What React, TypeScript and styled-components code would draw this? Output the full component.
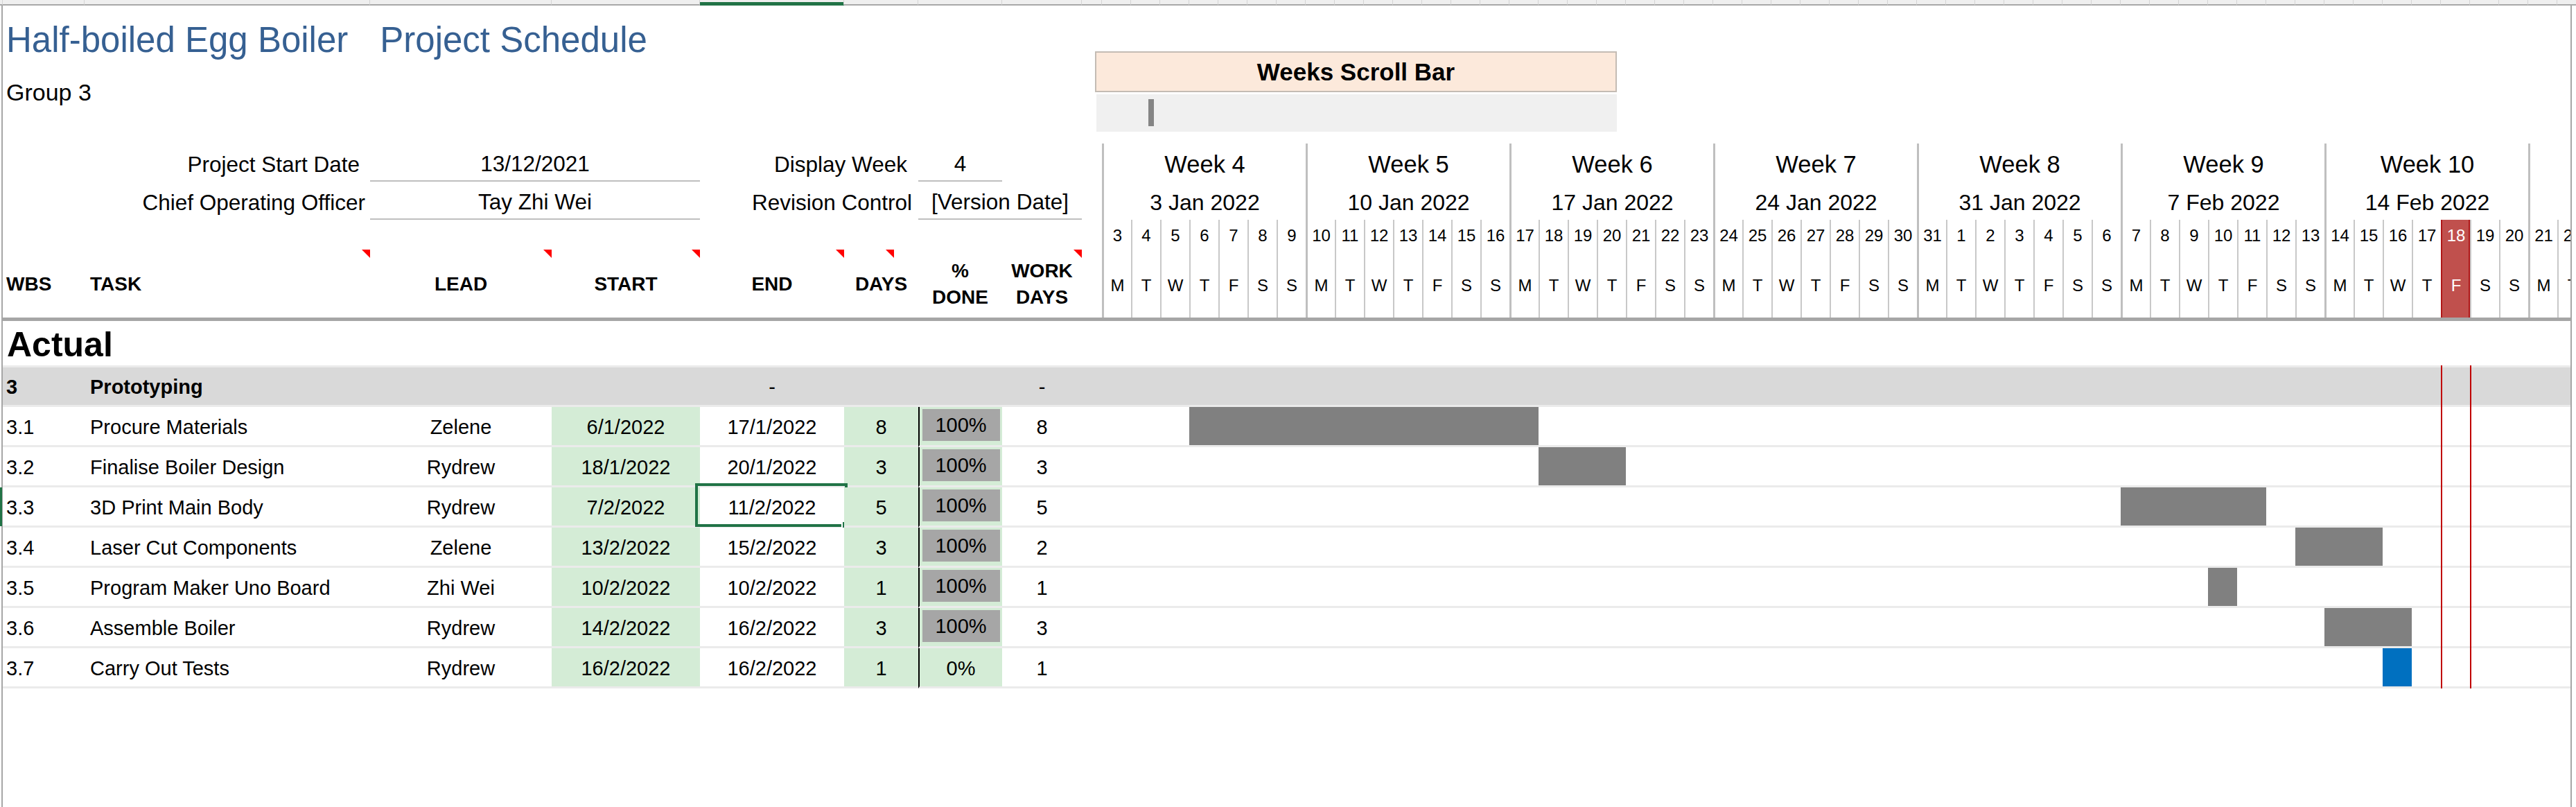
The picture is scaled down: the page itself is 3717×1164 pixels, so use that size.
import React from "react";
import styled, { createGlobalStyle, css } from "styled-components";

const DAY_W = 42;
const LEFT_COLS = [118, 412, 262, 214, 208, 107, 121, 115, 29];
const LEFT_W = 1586;
const GANTT_W = 2119;
const TODAY = 46; // 18 Feb 2022, counted from Mon 3 Jan 2022
const GREEN = "#d4ecd6";
const colTemplate = LEFT_COLS.map((w) => `${w}px`).join(" ");

const GlobalStyle = createGlobalStyle`
  html, body {
    margin: 0;
    padding: 0;
    background: #ffffff;
  }
  body {
    font-family: "Liberation Sans", Arial, sans-serif;
    color: #000000;
  }
`;

const MONTHS = ["Jan", "Feb", "Mar"];
const LETTERS = ["M", "T", "W", "T", "F", "S", "S"];

// week 11 only peeks in at the right edge, its labels sit off screen
const weeks = Array.from({ length: 8 }, (_, w) => {
  const first = new Date(2022, 0, 3 + w * 7);
  return {
    n: w + 4,
    shown: w < 7,
    date: `${first.getDate()} ${MONTHS[first.getMonth()]} ${first.getFullYear()}`,
    days: Array.from({ length: 7 }, (_, d) => ({
      num: new Date(2022, 0, 3 + w * 7 + d).getDate(),
      idx: w * 7 + d,
    })),
  };
});

type Task = {
  wbs: string;
  task: string;
  lead: string;
  start: string;
  end: string;
  days: number;
  done: number;
  work: number;
  from: number;
  span: number;
};

const tasks: Task[] = [
  { wbs: "3.1", task: "Procure Materials", lead: "Zelene", start: "6/1/2022", end: "17/1/2022", days: 8, done: 100, work: 8, from: 3, span: 12 },
  { wbs: "3.2", task: "Finalise Boiler Design", lead: "Rydrew", start: "18/1/2022", end: "20/1/2022", days: 3, done: 100, work: 3, from: 15, span: 3 },
  { wbs: "3.3", task: "3D Print Main Body", lead: "Rydrew", start: "7/2/2022", end: "11/2/2022", days: 5, done: 100, work: 5, from: 35, span: 5 },
  { wbs: "3.4", task: "Laser Cut Components", lead: "Zelene", start: "13/2/2022", end: "15/2/2022", days: 3, done: 100, work: 2, from: 41, span: 3 },
  { wbs: "3.5", task: "Program Maker Uno Board", lead: "Zhi Wei", start: "10/2/2022", end: "10/2/2022", days: 1, done: 100, work: 1, from: 38, span: 1 },
  { wbs: "3.6", task: "Assemble Boiler", lead: "Rydrew", start: "14/2/2022", end: "16/2/2022", days: 3, done: 100, work: 3, from: 42, span: 3 },
  { wbs: "3.7", task: "Carry Out Tests", lead: "Rydrew", start: "16/2/2022", end: "16/2/2022", days: 1, done: 0, work: 1, from: 44, span: 1 },
];

const headers = [
  { label: "WBS", left: true, pad: 5 },
  { label: "TASK", left: true, pad: 8, flag: 0 },
  { label: "LEAD", flag: 0 },
  { label: "START", flag: 0 },
  { label: "END", flag: 0 },
  { label: "DAYS", flag: 35 },
  { label: "%\nDONE" },
  { label: "WORK\nDAYS", flag: 0 },
  { label: "" },
];

export default function App() {
  return (
    <>
      <GlobalStyle />
      <Strip>
        <StripCell />
        {LEFT_COLS.map((_, i) => (
          <StripCell key={i} $active={i === 4} />
        ))}
        {Array.from({ length: 51 }, (_, i) => (
          <StripCell key={`d${i}`} />
        ))}
      </Strip>
      <Sheet>
        <TitleBand>
          <TitleBlock>
            <Title>
              <span>Half-boiled Egg Boiler</span>
              <span>Project Schedule</span>
            </Title>
            <GroupName>Group 3</GroupName>
          </TitleBlock>
          <ScrollBlock>
            <ScrollLabel>Weeks Scroll Bar</ScrollLabel>
            <ScrollTrack>
              <Thumb />
            </ScrollTrack>
          </ScrollBlock>
        </TitleBand>

        <HeadBand>
          <LeftHead>
            <InfoRow>
              <InfoLabel $pad={15}>Project Start Date</InfoLabel>
              <InfoValue>13/12/2021</InfoValue>
              <InfoLabel $pad={16}>Display Week</InfoLabel>
              <InfoValue>4</InfoValue>
            </InfoRow>
            <InfoRow>
              <InfoLabel $pad={7}>Chief Operating Officer</InfoLabel>
              <InfoValue>Tay Zhi Wei</InfoValue>
              <InfoLabel $pad={9}>Revision Control</InfoLabel>
              <InfoValue $span={2}>[Version Date]</InfoValue>
            </InfoRow>
            <ColumnHeader>
              {headers.map((h, i) => (
                <HeadCell key={i} $left={h.left} $pad={h.pad} $flag={h.flag}>
                  {h.label}
                </HeadCell>
              ))}
            </ColumnHeader>
          </LeftHead>
          <WeekStrip>
            {weeks.map((w) => (
              <Week key={w.n}>
                <WeekLabel>{w.shown ? `Week ${w.n}` : ""}</WeekLabel>
                <WeekDate>{w.shown ? w.date : ""}</WeekDate>
                <DayGrid>
                  {w.days.map((d, i) => (
                    <Day key={d.idx} $first={i === 0} $today={d.idx === TODAY}>
                      <DayNum>{d.num}</DayNum>
                      <DayLetter>{LETTERS[i]}</DayLetter>
                    </Day>
                  ))}
                </DayGrid>
              </Week>
            ))}
          </WeekStrip>
        </HeadBand>

        <Body>
          <ActualRow>Actual</ActualRow>
          <Row $phase>
            <Cell $left $pad={5} $bold>
              3
            </Cell>
            <Cell $left $pad={8} $bold>
              Prototyping
            </Cell>
            <Cell />
            <Cell />
            <Cell>-</Cell>
            <Cell />
            <Cell />
            <Cell>-</Cell>
            <Cell />
            <GanttTrack />
          </Row>
          {tasks.map((t) => (
            <Row key={t.wbs} $selected={t.wbs === "3.3"}>
              <Cell $left $pad={5}>
                {t.wbs}
              </Cell>
              <Cell $left $pad={8}>
                {t.task}
              </Cell>
              <Cell>{t.lead}</Cell>
              <Cell $fill={GREEN}>{t.start}</Cell>
              <Cell>
                {t.end}
                {t.wbs === "3.3" && (
                  <Selection>
                    <FillHandle />
                  </Selection>
                )}
              </Cell>
              <Cell $fill={GREEN}>{t.days}</Cell>
              <Cell $fill={GREEN} $rule>
                {t.done === 100 ? <DoneBox>100%</DoneBox> : `${t.done}%`}
              </Cell>
              <Cell>{t.work}</Cell>
              <Cell />
              <GanttTrack>
                <Bar $start={t.from} $span={t.span} $color={t.done === 100 ? "#808080" : "#0070c0"} />
              </GanttTrack>
            </Row>
          ))}
          <TodayMarker $day={TODAY} />
        </Body>
      </Sheet>
    </>
  );
}

const Strip = styled.div`
  display: grid;
  grid-template-columns: 4px ${colTemplate} repeat(51, ${DAY_W}px);
  height: 8px;
  overflow: hidden;
  background: #efefef;
`;

const StripCell = styled.div<{ $active?: boolean }>`
  box-sizing: border-box;
  border-right: 1px solid #d4d4d4;
  border-bottom: 2px solid #a8a8a8;
  ${(p) =>
    p.$active &&
    css`
      border-bottom-color: #217346;
      background: linear-gradient(transparent 3px, #217346 3px);
    `}
`;

const Sheet = styled.div`
  position: relative;
  margin-left: 2px;
  width: ${LEFT_W + GANTT_W}px;
  height: 1156px;
  border-left: 2px solid #a6a6a6;
  border-right: 2px solid #a6a6a6;
`;

const TitleBand = styled.div`
  display: flex;
  height: 199px;
`;

const TitleBlock = styled.div`
  flex: none;
  width: 1576px;
  padding: 22px 0 0 5px;
  box-sizing: border-box;
`;

const Title = styled.h1`
  display: flex;
  gap: 46px;
  margin: 0;
  font-size: 51px;
  font-weight: 400;
  line-height: 55px;
  color: #366092;
`;

const GroupName = styled.div`
  margin-top: 28px;
  font-size: 34px;
  line-height: 40px;
`;

const ScrollBlock = styled.div`
  display: flex;
  flex-direction: column;
  gap: 3px;
  width: 753px;
  padding-top: 66px;
`;

const ScrollLabel = styled.div`
  display: flex;
  align-items: center;
  justify-content: center;
  height: 59px;
  box-sizing: border-box;
  border: 2px solid #c4bcb4;
  background: #fce9db;
  font-size: 35px;
  font-weight: 700;
`;

const ScrollTrack = styled.div`
  height: 54px;
  margin-left: 2px;
  padding: 7px 0 0 75px;
  box-sizing: border-box;
  background: #f0f0f0;
`;

const Thumb = styled.div`
  width: 8px;
  height: 39px;
  background: #858585;
`;

const HeadBand = styled.div`
  display: flex;
  border-bottom: 5px solid #a6a6a6;
`;

const LeftHead = styled.div`
  flex: none;
  width: ${LEFT_W}px;
`;

const InfoRow = styled.div`
  display: grid;
  grid-template-columns: 530px 476px 315px 121px 115px 29px;
  height: 55px;
`;

const InfoLabel = styled.div<{ $pad: number }>`
  display: flex;
  align-items: center;
  justify-content: flex-end;
  padding: 5px ${(p) => p.$pad}px 0 0;
  font-size: 31.5px;
  white-space: nowrap;
`;

const InfoValue = styled.div<{ $span?: number }>`
  grid-column: span ${(p) => p.$span ?? 1};
  display: flex;
  align-items: center;
  justify-content: center;
  padding-top: 5px;
  box-sizing: border-box;
  border-bottom: 2px solid #bfbfbf;
  font-size: 31.5px;
  white-space: nowrap;
`;

const ColumnHeader = styled.div`
  display: grid;
  grid-template-columns: ${colTemplate};
  height: 141px;
  padding-top: 43px;
  box-sizing: border-box;
`;

// $flag is the distance of the red comment mark from the cell's right edge
const HeadCell = styled.div<{ $left?: boolean; $pad?: number; $flag?: number }>`
  position: relative;
  display: flex;
  align-items: center;
  justify-content: ${(p) => (p.$left ? "flex-start" : "center")};
  padding: 2px 0 0 ${(p) => p.$pad ?? 0}px;
  font-size: 28px;
  font-weight: 700;
  line-height: 38px;
  text-align: center;
  white-space: pre-line;

  ${(p) =>
    p.$flag !== undefined &&
    css`
      &::after {
        content: "";
        position: absolute;
        top: 0;
        right: ${p.$flag}px;
        border-top: 12px solid #ff0000;
        border-left: 12px solid transparent;
      }
    `}
`;

const WeekStrip = styled.div`
  display: flex;
  width: ${GANTT_W}px;
  overflow: hidden;
`;

const Week = styled.div`
  flex: none;
  display: flex;
  flex-direction: column;
  width: ${DAY_W * 7}px;
  box-sizing: border-box;
  border-left: 3px solid #bfbfbf;
`;

const WeekLabel = styled.div`
  display: flex;
  align-items: center;
  justify-content: center;
  height: 55px;
  padding-top: 5px;
  box-sizing: border-box;
  font-size: 34.5px;
`;

const WeekDate = styled(WeekLabel)`
  font-size: 32px;
`;

const DayGrid = styled.div`
  display: grid;
  grid-template-columns: ${DAY_W - 3}px repeat(6, ${DAY_W}px);
  height: 141px;
`;

const Day = styled.div<{ $first?: boolean; $today?: boolean }>`
  display: flex;
  flex-direction: column;
  box-sizing: border-box;
  border-left: ${(p) => (p.$first ? "none" : "2px solid #c8c8c8")};
  font-size: 24px;

  ${(p) =>
    p.$today &&
    css`
      background: #c0504d;
      color: #ffffff;
      border-left-color: #b01818;
      box-shadow: inset -2px 0 0 #b01818;
    `}
`;

const DayNum = styled.div`
  display: flex;
  align-items: center;
  justify-content: center;
  height: 45px;
`;

const DayLetter = styled.div`
  display: flex;
  align-items: center;
  justify-content: center;
  flex: 1;
  padding-top: 4px;
`;

const Body = styled.div`
  position: relative;
`;

const ActualRow = styled.div`
  display: flex;
  align-items: center;
  height: 67px;
  padding: 3px 0 0 6px;
  box-sizing: border-box;
  border-bottom: 3px solid #ebebeb;
  font-size: 50px;
  font-weight: 700;
`;

const Row = styled.div<{ $phase?: boolean; $selected?: boolean }>`
  position: relative;
  display: grid;
  grid-template-columns: ${colTemplate} ${GANTT_W}px;
  height: ${(p) => (p.$phase ? 57 : 58)}px;
  background: ${(p) => (p.$phase ? "#d9d9d9" : "#ffffff")};

  ${(p) =>
    p.$selected &&
    css`
      &::before {
        content: "";
        position: absolute;
        left: -4px;
        top: 0;
        bottom: 2px;
        width: 3px;
        background: #217346;
      }
    `}
`;

const Cell = styled.div<{
  $left?: boolean;
  $pad?: number;
  $fill?: string;
  $bold?: boolean;
  $rule?: boolean;
}>`
  position: relative;
  display: flex;
  align-items: center;
  justify-content: ${(p) => (p.$left ? "flex-start" : "center")};
  padding: 3px 0 0 ${(p) => p.$pad ?? 0}px;
  box-sizing: border-box;
  border-bottom: 3px solid #ebebeb;
  background: ${(p) => p.$fill ?? "transparent"};
  font-size: 29px;
  font-weight: ${(p) => (p.$bold ? 700 : 400)};
  white-space: nowrap;
  ${(p) =>
    p.$rule &&
    css`
      border-left: 2px solid #000000;
    `}
`;

const DoneBox = styled.div`
  display: flex;
  align-items: center;
  justify-content: center;
  align-self: flex-start;
  width: 112px;
  height: 46px;
  background: #a6a6a6;
`;

const Selection = styled.div`
  position: absolute;
  top: -6px;
  right: -5px;
  bottom: -2px;
  left: -7px;
  border: 4px solid #217346;
  pointer-events: none;
`;

const FillHandle = styled.div`
  position: absolute;
  right: -8px;
  bottom: -8px;
  width: 11px;
  height: 11px;
  background: #217346;
  border-top: 2px solid #ffffff;
  border-left: 2px solid #ffffff;
`;

const GanttTrack = styled.div`
  display: grid;
  grid-template-columns: repeat(51, ${DAY_W}px);
  grid-template-rows: 55px;
  overflow: hidden;
  box-sizing: border-box;
  border-bottom: 3px solid #ebebeb;
`;

const Bar = styled.div<{ $start: number; $span: number; $color: string }>`
  grid-row: 1;
  grid-column: ${(p) => p.$start + 1} / span ${(p) => p.$span};
  background: ${(p) => p.$color};
`;

const TodayMarker = styled.div<{ $day: number }>`
  position: absolute;
  top: 64px;
  left: ${(p) => LEFT_W + p.$day * DAY_W}px;
  width: ${DAY_W + 2}px;
  height: 466px;
  box-sizing: border-box;
  border-left: 2px solid #c00000;
  border-right: 2px solid #c00000;
  pointer-events: none;
`;
